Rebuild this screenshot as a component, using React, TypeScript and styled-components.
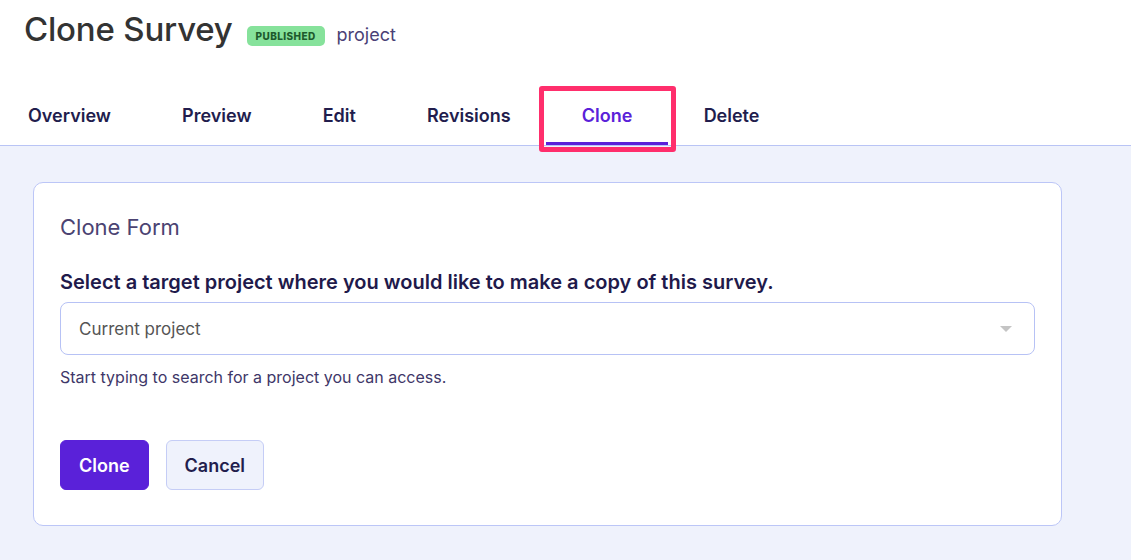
import styled, { createGlobalStyle } from "styled-components";

const GlobalStyle = createGlobalStyle`
  html, body {
    margin: 0;
    padding: 0;
    background: #eff2fc;
    font-family: Inter, "Noto Sans", sans-serif;
  }
  * { box-sizing: border-box; }
`;

const Page = styled.div`
  min-height: 560px;
  background: #eff2fc;
`;

const Header = styled.header`
  background: #ffffff;
  border-bottom: 1px solid #b9c4f5;
  padding: 9px 0 0;
`;

const TitleRow = styled.div`
  display: flex;
  align-items: baseline;
  padding-left: 24px;
  height: 40px;
`;

const Title = styled.h1`
  margin: 0;
  font-size: 33px;
  line-height: 40px;
  font-weight: 500;
  color: #333333;
  letter-spacing: -0.2px;
`;

const Badge = styled.span`
  margin-left: 14px;
  background: #86e29b;
  color: #1d5a2c;
  font-size: 10px;
  font-weight: 800;
  letter-spacing: 0.4px;
  padding: 4px 9px;
  border-radius: 5px;
  position: relative;
  top: -1px;
`;

const Project = styled.span`
  margin-left: 12px;
  font-size: 18px;
  color: #4a4176;
`;

const Tabs = styled.nav`
  display: flex;
  margin-top: 39px;
`;

const Tab = styled.div<{ $active?: boolean }>`
  position: relative;
  height: 57px;
  display: flex;
  align-items: center;
  padding: 0 35.6px;
  font-size: 18px;
  font-weight: 600;
  color: ${(p) => (p.$active ? "#5a21d9" : "#221d4d")};
  border-bottom: 3px solid ${(p) => (p.$active ? "#5a21d9" : "transparent")};
  &:first-child {
    padding-left: 28px;
  }
`;

const Highlight = styled.span`
  position: absolute;
  left: -7px;
  right: -8px;
  top: -2px;
  bottom: -10px;
  border: 5px solid #ff2e6c;
  border-radius: 3px;
  pointer-events: none;
`;

const Main = styled.main`
  padding: 36px 69px 0 33px;
`;

const Card = styled.section`
  background: #ffffff;
  border: 1px solid #bcc6f7;
  border-radius: 10px;
  padding: 29px 26px 35px;
`;

const CardTitle = styled.h2`
  margin: 0;
  font-size: 22px;
  line-height: 30px;
  font-weight: 400;
  color: #4b4372;
`;

const Label = styled.p`
  margin: 27px 0 0;
  font-size: 20px;
  line-height: 26px;
  font-weight: 600;
  color: #1f1a4b;
`;

const Select = styled.div`
  margin-top: 7px;
  height: 53px;
  border: 1px solid #b7c2f5;
  border-radius: 8px;
  display: flex;
  align-items: center;
  justify-content: space-between;
  padding: 0 22px 0 18px;
  font-size: 17px;
  color: #555555;
`;

const Caret = styled.span`
  width: 0;
  height: 0;
  border-left: 6px solid transparent;
  border-right: 6px solid transparent;
  border-top: 6px solid #c4c4c4;
`;

const Help = styled.p`
  margin: 12px 0 0;
  font-size: 16px;
  line-height: 20px;
  color: #3e3768;
`;

const Actions = styled.div`
  display: flex;
  gap: 17px;
  margin-top: 53px;
`;

const Button = styled.button<{ $primary?: boolean }>`
  height: 50px;
  padding: 0 18px;
  border-radius: 6px;
  font-family: inherit;
  font-size: 18px;
  font-weight: 600;
  border: 1px solid ${(p) => (p.$primary ? "#5a21d9" : "#c5cdf6")};
  background: ${(p) => (p.$primary ? "#5a21d9" : "#eff2fc")};
  color: ${(p) => (p.$primary ? "#ffffff" : "#221d4d")};
  cursor: pointer;
`;

const tabs = ["Overview", "Preview", "Edit", "Revisions", "Clone", "Delete"];

export default function App() {
  return (
    <Page>
      <GlobalStyle />
      <Header>
        <TitleRow>
          <Title>Clone Survey</Title>
          <Badge>PUBLISHED</Badge>
          <Project>project</Project>
        </TitleRow>
        <Tabs>
          {tabs.map((t) => (
            <Tab key={t} $active={t === "Clone"}>
              {t}
              {t === "Clone" && <Highlight />}
            </Tab>
          ))}
        </Tabs>
      </Header>
      <Main>
        <Card>
          <CardTitle>Clone Form</CardTitle>
          <Label>Select a target project where you would like to make a copy of this survey.</Label>
          <Select>
            <span>Current project</span>
            <Caret />
          </Select>
          <Help>Start typing to search for a project you can access.</Help>
          <Actions>
            <Button $primary>Clone</Button>
            <Button>Cancel</Button>
          </Actions>
        </Card>
      </Main>
    </Page>
  );
}
